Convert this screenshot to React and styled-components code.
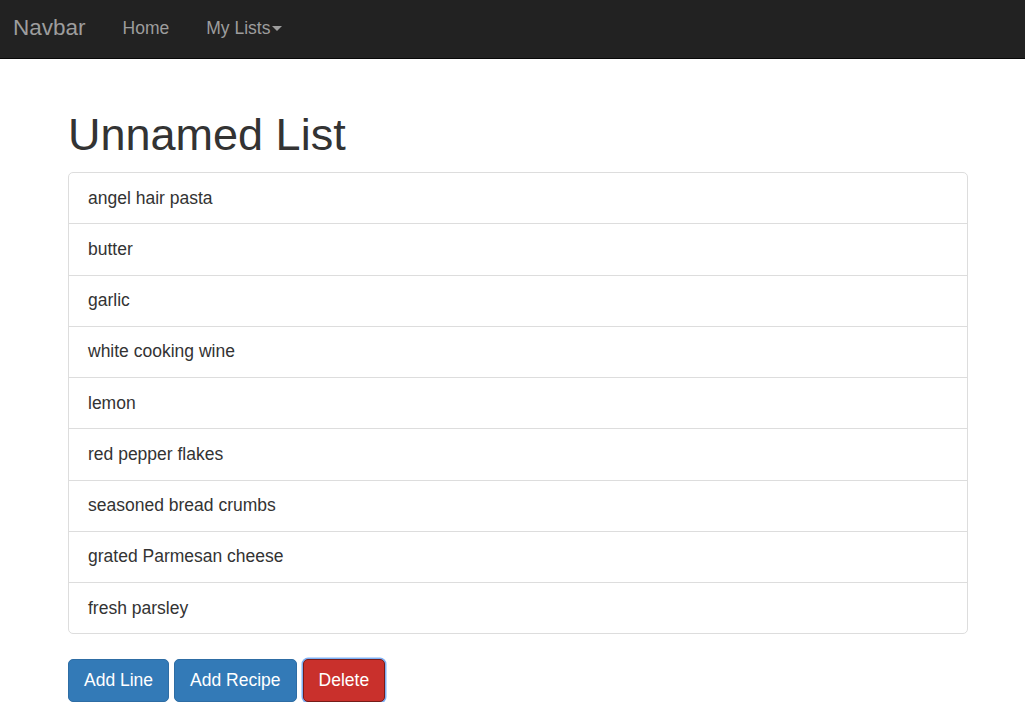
import React from "react";
import styled, { createGlobalStyle } from "styled-components";

const Global = createGlobalStyle`
  html, body { margin: 0; padding: 0; background: #fff; }
  body {
    font-family: "Liberation Sans", Arial, Helvetica, sans-serif;
    font-size: 17.5px;
    line-height: 1.42857;
    color: #333;
  }
  * { box-sizing: border-box; }
`;

const Navbar = styled.nav`
  background: #222;
  border-bottom: 1px solid #080808;
  height: 59px;
  display: flex;
  align-items: center;
  padding: 0 13px;
  margin-bottom: 25px;
`;

const Brand = styled.a`
  font-size: 22.5px;
  color: #9d9d9d;
  text-decoration: none;
  margin-right: 37px;
  margin-top: -2px;
`;

const NavLink = styled.a`
  font-size: 17.5px;
  color: #9d9d9d;
  text-decoration: none;
  margin-right: 37px;
  margin-top: -2px;
  display: inline-flex;
  align-items: center;
`;

const Caret = styled.span`
  display: inline-block;
  width: 0;
  height: 0;
  margin-left: 2px;
  margin-top: 2px;
  border-top: 5px solid #9d9d9d;
  border-left: 5px solid transparent;
  border-right: 5px solid transparent;
`;

const Container = styled.main`
  width: 900px;
  margin: 0 0 0 68px;
  display: flow-root;
`;

const Title = styled.h1`
  font-size: 45px;
  font-weight: 400;
  line-height: 1.1;
  margin: 26px 0 12.5px;
  color: #333;
`;

const List = styled.ul`
  list-style: none;
  margin: 0 0 25px;
  padding: 0;
  border: 1px solid #ddd;
  border-radius: 5px;
`;

const Item = styled.li`
  padding: 12.625px 19px;
  line-height: 25px;
  border-top: 1px solid #ddd;
  &:first-child { border-top: none; }
`;

const Actions = styled.div`
  display: flex;
  gap: 5px;
  align-items: center;
`;

const Button = styled.button`
  font-family: inherit;
  font-size: 17.5px;
  line-height: 25px;
  padding: 7.5px 15px;
  height: 43px;
  border-radius: 5px;
  color: #fff;
  cursor: pointer;
  background: ${(p) => (p.$variant === "danger" ? "#c9302c" : "#337ab7")};
  border: 1px solid ${(p) => (p.$variant === "danger" ? "#761c19" : "#2e6da4")};
  box-shadow: ${(p) => (p.$focused ? "0 0 0 1.5px #7fb0f4" : "none")};
  margin-left: ${(p) => (p.$focused ? "1px" : "0")};
`;

const items = [
  "angel hair pasta",
  "butter",
  "garlic",
  "white cooking wine",
  "lemon",
  "red pepper flakes",
  "seasoned bread crumbs",
  "grated Parmesan cheese",
  "fresh parsley",
];

export default function App() {
  return (
    <>
      <Global />
      <Navbar>
        <Brand href="#">Navbar</Brand>
        <NavLink href="#">Home</NavLink>
        <NavLink href="#">
          My Lists<Caret />
        </NavLink>
      </Navbar>
      <Container>
        <Title>Unnamed List</Title>
        <List>
          {items.map((t) => (
            <Item key={t}>{t}</Item>
          ))}
        </List>
        <Actions>
          <Button>Add Line</Button>
          <Button>Add Recipe</Button>
          <Button $variant="danger" $focused>
            Delete
          </Button>
        </Actions>
      </Container>
    </>
  );
}
